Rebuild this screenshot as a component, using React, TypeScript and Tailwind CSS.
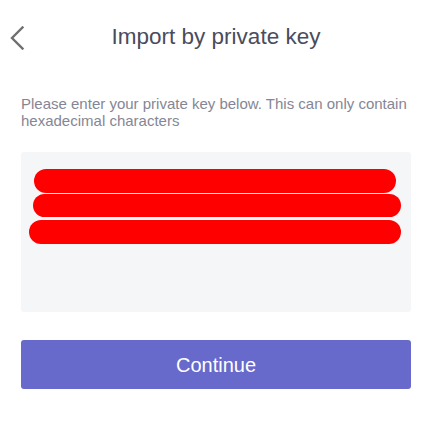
export default function App() {
  return (
    <div
      className="min-h-[426px] w-full bg-white pl-[21px] pr-[17px]"
      style={{ fontFamily: '"Liberation Sans", Arial, sans-serif' }}
    >
      <div className="relative flex h-[74px] items-center justify-center">
        <button type="button" aria-label="Back" className="absolute -left-[12px] top-[26px] p-0">
          <svg width="16" height="24" viewBox="0 0 16 24" fill="none">
            <path d="M13.5 1.5L3 12l10.5 10.5" stroke="#707070" strokeWidth="2.4" strokeLinecap="square" />
          </svg>
        </button>
        <h1 className="text-[22.5px] font-normal leading-none text-[#4a4c5c]">Import by private key</h1>
      </div>

      <p className="mt-[21px] text-[15px] leading-[17px] text-[#858695]">
        Please enter your private key below. This can only contain hexadecimal characters
      </p>

      <div className="mt-[23px] h-[160px] rounded-[3px] bg-[#f5f6f8] pt-[17px]">
        <div className="ml-[13px] h-[24px] w-[362px] rounded-full bg-[#ff0000]" />
        <div className="ml-[12px] mt-[1px] h-[23px] w-[368px] rounded-full bg-[#ff0000]" />
        <div className="ml-[8px] mt-[3px] h-[24px] w-[372px] rounded-full bg-[#ff0000]" />
      </div>

      <button
        type="button"
        className="mt-[28px] flex h-[49px] w-full items-center justify-center rounded-[3px] bg-[#676acb] text-[20px] text-white"
      >
        Continue
      </button>
    </div>
  )
}
